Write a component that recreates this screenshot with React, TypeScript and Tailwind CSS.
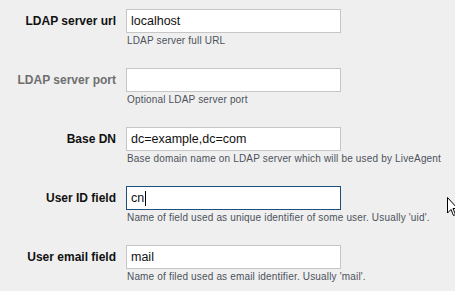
import React from "react";

type Row = {
  label: string;
  value: string;
  help: string;
  disabled?: boolean;
  focused?: boolean;
};

const rows: Row[] = [
  { label: "LDAP server url", value: "localhost", help: "LDAP server full URL" },
  { label: "LDAP server port", value: "", help: "Optional LDAP server port", disabled: true },
  { label: "Base DN", value: "dc=example,dc=com", help: "Base domain name on LDAP server which will be used by LiveAgent" },
  { label: "User ID field", value: "cn", help: "Name of field used as unique identifier of some user. Usually 'uid'.", focused: true },
  { label: "User email field", value: "mail", help: "Name of filed used as email identifier. Usually 'mail'." },
];

export default function App() {
  return (
    <div
      className="relative w-[455px] h-[291px] overflow-hidden bg-[#efefef] pt-[9px]"
      style={{ fontFamily: '"Liberation Sans", Arial, sans-serif' }}
    >
      {rows.map((r) => (
        <div key={r.label} className="flex items-start h-[59px]">
          <div
            className={`w-[126px] pr-[10px] h-[24px] flex items-center justify-end text-[12px] font-bold whitespace-nowrap ${
              r.disabled ? "text-[#6e6e6e]" : "text-[#111111]"
            }`}
          >
            {r.label}
          </div>
          <div className="flex flex-col">
            <div
              className={`w-[215px] h-[24px] bg-white flex items-center pl-[4px] text-[12.5px] text-[#111] ${
                r.focused ? "border border-[#1d4f7c]" : "border border-[#c6c6c6]"
              }`}
            >
              <span>{r.value}</span>
              {r.focused && <span className="inline-block w-[1px] h-[15px] bg-black ml-[1px]" />}
            </div>
            <div className="mt-[2px] ml-[1px] text-[10px] leading-[12px] tracking-[0.17px] text-[#4d525c] whitespace-nowrap">
              {r.help}
            </div>
          </div>
        </div>
      ))}
      <svg
        className="absolute left-[447px] top-[197px]"
        width="12"
        height="20"
        viewBox="0 0 12 20"
      >
        <path
          d="M0.5 0.5 L0.5 16 L4 12.5 L6.5 18.5 L8.5 17.5 L6 11.5 L10.5 11.5 Z"
          fill="white"
          stroke="black"
          strokeWidth="1"
          strokeLinejoin="miter"
        />
      </svg>
    </div>
  );
}
